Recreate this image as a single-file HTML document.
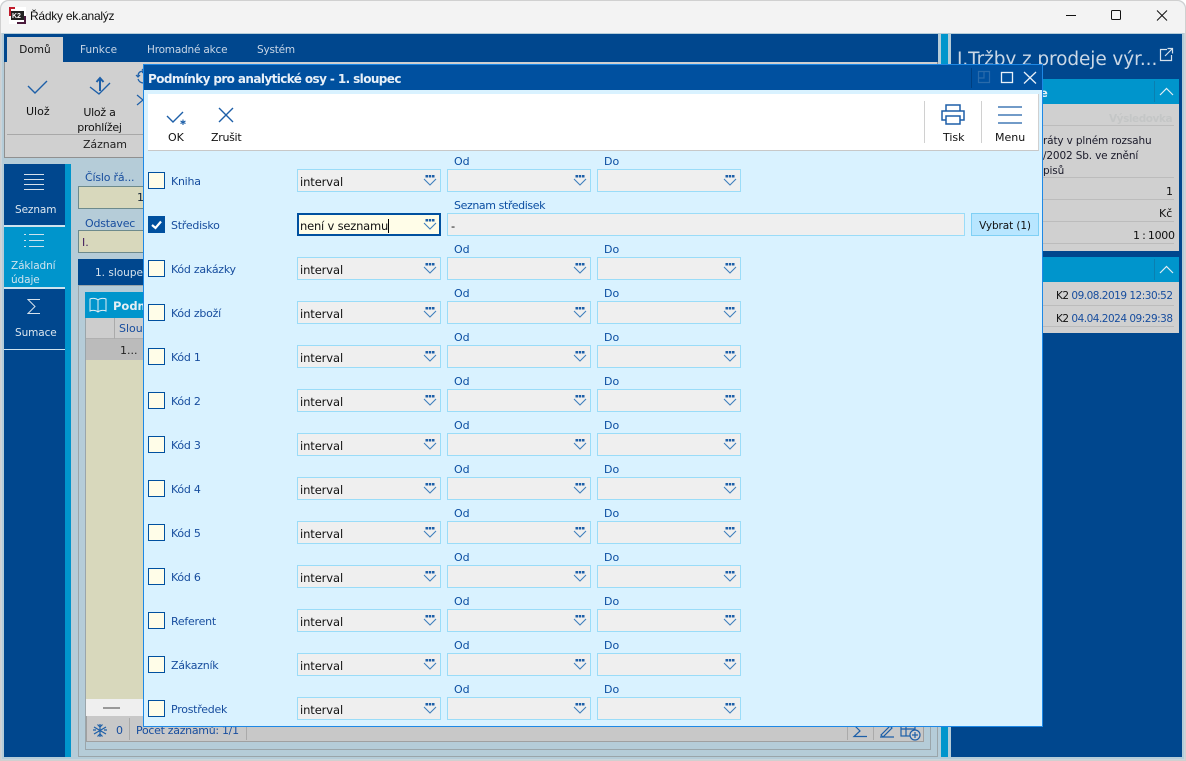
<!DOCTYPE html>
<html><head><meta charset="utf-8">
<style>
*{box-sizing:border-box}
html,body{margin:0;padding:0;width:1186px;height:761px;overflow:hidden;background:#fff}
body{position:relative;font-family:"DejaVu Sans","Liberation Sans",sans-serif;font-size:11px;color:#111}
.a{position:absolute;white-space:nowrap}
.cb{position:absolute;left:148px;width:17px;height:17px;background:#fffde8;border:1px solid #00509f}
.sel{position:absolute;width:144px;height:23px;background:#efefef;border:1px solid #9adcf8;line-height:22px;padding:1px 0 0 2px;font-size:11.5px;letter-spacing:-.1px}
.ar{position:absolute;right:3px;top:4px;width:14px;height:14px}
.lab{position:absolute;left:171px;color:#174d9e;font-size:11px;line-height:14px;white-space:nowrap;letter-spacing:-.25px;transform:translateY(1px)}
.od{position:absolute;color:#0b4ea2;font-size:11px;line-height:12px;white-space:nowrap;transform:translateY(1px)}
</style></head><body>
<svg width="0" height="0" style="position:absolute"><defs><symbol id="dd" viewBox="0 0 14 14"><g fill="#1d5fa8"><rect x="2.500" y="1" width="2.500" height="2.500"/><rect x="5.750" y="1" width="2.500" height="2.500"/><rect x="9" y="1" width="2.500" height="2.500"/></g><path d="M1 5 L7 11 L13 5" fill="none" stroke="#3f7fbc" stroke-width="1.100"/></symbol></defs></svg>

<!-- window chrome -->
<div class="a" style="left:0;top:0;width:1186px;height:761px;background:#c9d5dc;border:1px solid #d0d0d0;border-radius:8px 8px 0 0"></div>
<div class="a" style="left:1px;top:1px;width:1184px;height:32px;background:#f3f3f3;border-radius:8px 8px 0 0"></div>
<svg class="a" style="left:9px;top:7px" width="17" height="17"><rect width="17" height="17" fill="#fff"/><path d="M0 0H6V2H2V9H0Z" fill="#c01c2c"/><path d="M17 9V17H8V15H15V9Z" fill="#4a1a3c"/><rect x="2" y="4" width="13" height="9" fill="#222"/><text x="3" y="11" font-family="Liberation Sans" font-size="7" font-weight="bold" fill="#fff">K2</text></svg>
<div class="a" style="left:30px;top:8px;font:12px 'Liberation Sans',sans-serif;letter-spacing:-.25px;line-height:16px">Řádky ek.analýz</div>
<svg class="a" style="left:1060px;top:5px" width="120" height="22" fill="none" stroke="#111" stroke-width="1"><path d="M6 10.500H16"/><rect x="51.500" y="5.500" width="9" height="9" rx="1"/><path d="M97 5.500L107 15.500M107 5.500L97 15.500"/></svg>

<div class="a" style="left:2px;top:33px;width:1182px;height:726px;background:#b5ccd8"></div>

<!-- ribbon -->
<div class="a" style="left:4px;top:34px;width:934px;height:28px;background:#00478e"></div>
<div class="a" style="left:7px;top:37px;width:56px;height:25px;background:#d0d0d0;text-align:center;line-height:26px;font-size:10.500px;color:#111">Domů</div>
<div class="a" style="left:80px;top:37px;line-height:26px;font-size:10.500px;color:#c8d6e6">Funkce</div>
<div class="a" style="left:147px;top:37px;line-height:26px;font-size:10.500px;letter-spacing:-.2px;color:#c8d6e6">Hromadné akce</div>
<div class="a" style="left:257px;top:37px;line-height:26px;font-size:10.500px;letter-spacing:-.2px;color:#c8d6e6">Systém</div>
<div class="a" style="left:4px;top:62px;width:934px;height:96px;background:#d0d0d0;border:1px solid #909090;border-top:0"></div>
<div class="a" style="left:7px;top:134px;width:136px;height:1px;background:#a8a8a8"></div>
<svg class="a" style="left:25px;top:76px" width="100" height="30" fill="none" stroke="#1d5fa8" stroke-width="1.400"><path d="M3 10L10 17L22 5"/><path d="M65 11L74 18L85 7"/><path d="M75 15V3M71.500 6L75 2L78.500 6" stroke-width="2"/></svg>
<svg class="a" style="left:135px;top:68px" width="9" height="40" fill="none" stroke="#1d5fa8" stroke-width="1.200"><path d="M3 8C3 4 6 3 9 3M3 11C4 14 6 15 9 15M7 1L9 3L7 5M1 7L3 9L5 7"/><path d="M2 27L8 32L2 37"/></svg>
<div class="a" style="left:26px;top:105px;line-height:14px;color:#111;font-size:11px">Ulož</div>
<div class="a" style="left:77px;top:105px;line-height:15px;color:#111;font-size:11px;text-align:center;width:45px;letter-spacing:-.25px">Ulož a<br>prohlížej</div>
<div class="a" style="left:83px;top:138px;line-height:14px;color:#222;font-size:11px;letter-spacing:-.1px">Záznam</div>

<!-- sidebar -->
<div class="a" style="left:4px;top:164px;width:61px;height:593px;background:#00478e"></div>
<div class="a" style="left:65px;top:164px;width:6px;height:593px;background:#0095cc"></div>
<div class="a" style="left:4px;top:225px;width:61px;height:2px;background:#cfe3ee"></div>
<div class="a" style="left:4px;top:227px;width:61px;height:60px;background:#0095cc"></div>
<div class="a" style="left:4px;top:287px;width:61px;height:2px;background:#cfe3ee"></div>
<div class="a" style="left:4px;top:349px;width:61px;height:1px;background:#cfe3ee"></div>
<svg class="a" style="left:24px;top:173px" width="20" height="18" stroke="#d6e2ec" stroke-width="1"><path d="M0 1.500H20M0 6.500H20M0 11.500H20M0 16.500H20"/></svg>
<div class="a" style="left:15px;top:204px;color:#dbe6ef;font-size:10.500px;line-height:13px;letter-spacing:-.1px">Seznam</div>
<svg class="a" style="left:24px;top:233px" width="20" height="16" stroke="#cfe3ee" stroke-width="1"><path d="M0 1.500H2M5 1.500H20M0 7.500H2M5 7.500H20M0 13.500H2M5 13.500H20"/></svg>
<div class="a" style="left:11px;top:260px;color:#cfe3ee;font-size:10.500px;line-height:13.500px;letter-spacing:-.1px">Základní<br>údaje</div>
<svg class="a" style="left:27px;top:298px" width="15" height="17" fill="none" stroke="#d6e2ec" stroke-width="1"><path d="M13 1.500H1L8 8.500L1 15.500H13"/></svg>
<div class="a" style="left:15px;top:327px;color:#dbe6ef;font-size:10.500px;line-height:13px;letter-spacing:-.1px">Sumace</div>

<!-- content -->
<div class="a" style="left:941px;top:34px;width:7px;height:723px;background:#0095cc"></div>
<div class="a" style="left:85px;top:171px;color:#174d9e;font-size:11px;line-height:14px;letter-spacing:-.2px">Číslo řá...</div>
<div class="a" style="left:78px;top:186px;width:80px;height:23px;background:#d8d8bc;border:1px solid #6d8a8c;text-align:right;padding-right:13px;line-height:22px;color:#123">1</div>
<div class="a" style="left:85px;top:217px;color:#174d9e;font-size:11px;line-height:14px;letter-spacing:-.2px">Odstavec</div>
<div class="a" style="left:78px;top:230px;width:80px;height:23px;background:#d8d8bc;border:1px solid #6d8a8c;line-height:23px;padding-left:3px;color:#401a5c">I.</div>
<div class="a" style="left:78px;top:259px;width:70px;height:26px;background:#00478e;color:#d6e2ec;line-height:28px;padding-left:17px;font-size:10.500px;overflow:hidden">1. sloupec</div>
<div class="a" style="left:78px;top:285px;width:860px;height:472px;border:1px solid #9aa5aa"></div>
<div class="a" style="left:85px;top:292px;width:846px;height:458px;border:1px solid #9aa5aa"></div>
<div class="a" style="left:85px;top:292px;width:840px;height:26px;background:#0095cc"></div>
<svg class="a" style="left:89px;top:297px" width="18" height="17" fill="none" stroke="#e4eef4" stroke-width="1"><path d="M9 3C7 1 3 1 1 2V14C3 13 7 13 9 15C11 13 15 13 17 14V2C15 1 11 1 9 3ZM9 3V15"/></svg>
<div class="a" style="left:113px;top:299px;color:#e4eef4;font-weight:bold;font-size:11.500px;line-height:14px">Podm</div>
<div class="a" style="left:86px;top:318px;width:60px;height:21px;background:#cdcdcd;border-bottom:1px solid #b0b0b0"></div>
<div class="a" style="left:114px;top:318px;width:1px;height:42px;background:#aaa"></div>
<div class="a" style="left:119px;top:322px;color:#174d9e;line-height:14px">Slou</div>
<div class="a" style="left:86px;top:339px;width:60px;height:21px;background:#bbb"></div>
<div class="a" style="left:120px;top:344px;color:#222;line-height:14px">1...</div>
<div class="a" style="left:86px;top:360px;width:60px;height:339px;background:#d8d8bc"></div>
<div class="a" style="left:86px;top:699px;width:60px;height:17px;background:#efefef"></div>
<div class="a" style="left:103px;top:707px;width:17px;height:2px;background:#999"></div>
<div class="a" style="left:86px;top:716px;width:838px;height:26px;background:#c8c8c8;border:1px solid #a0a0a0;border-top:0"></div>
<svg class="a" style="left:92px;top:723px" width="16" height="15" fill="none" stroke="#1d5fa8" stroke-width="1.200"><path d="M8 1V14M2 4L14 11M14 4L2 11M5.500 1.500L8 4L10.500 1.500M5.500 13.500L8 11L10.500 13.500M1 7H4M12 7H15"/></svg>
<div class="a" style="left:116px;top:724px;color:#174d9e;line-height:14px">0</div>
<div class="a" style="left:129px;top:718px;width:1px;height:22px;background:#aaa"></div>
<div class="a" style="left:136px;top:724px;color:#174d9e;line-height:14px;font-size:11px;letter-spacing:-.3px">Počet záznamů: 1/1</div>
<div class="a" style="left:246px;top:718px;width:1px;height:22px;background:#aaa"></div>
<div class="a" style="left:847px;top:718px;width:1px;height:22px;background:#aaa"></div>
<div class="a" style="left:873px;top:718px;width:1px;height:22px;background:#aaa"></div>
<svg class="a" style="left:846px;top:722px" width="78" height="20" fill="none" stroke="#1d5fa8" stroke-width="1.200"><path d="M20 3H8L14 9L8 14.500H21"/><path d="M35 13L44 4L46 6L37 15ZM34 15H48"/><rect x="55" y="3" width="14" height="11"/><path d="M55 7H69M60 3V14"/><circle cx="69" cy="13" r="5" fill="#d0d0d0"/><path d="M66 13H72M69 10V16"/></svg>

<!-- right panel -->
<div class="a" style="left:951px;top:34px;width:231px;height:723px;background:#00478e"></div>
<div class="a" style="left:957px;top:48px;font-size:18.500px;line-height:24px;color:#cbd8e6;letter-spacing:-.1px">I.Tržby z prodeje výr...</div>
<svg class="a" style="left:1159px;top:47px" width="15" height="15" fill="none" stroke="#d6e2ec" stroke-width="1.200"><path d="M8 2.500H1.500V13.500H12.500V8"/><path d="M6 9L13 2M8.500 1.500H13.500V6.500"/></svg>
<div class="a" style="left:951px;top:79px;width:228px;height:25px;background:#0095cc"></div>
<div class="a" style="left:1040px;top:86px;color:#e4eef4;font-weight:bold;font-size:11.500px;line-height:14px">e</div>
<div class="a" style="left:1154px;top:81px;width:1px;height:21px;background:#0a7fb0"></div>
<svg class="a" style="left:1159px;top:87px" width="15" height="9" fill="none" stroke="#e4eef4" stroke-width="1.200"><path d="M1 8L7.500 1.500L14 8"/></svg>
<div class="a" style="left:951px;top:104px;width:228px;height:147px;background:#d0d0d0"></div>
<div class="a" style="left:1109px;top:112px;color:#c4c6c6;font-weight:bold;font-size:10.500px;line-height:14px;letter-spacing:-.45px">Výsledovka</div>
<div class="a" style="left:1042px;top:125px;width:132px;height:1px;background:#bcbcbc"></div>
<div class="a" style="left:1043px;top:134px;color:#1a1a2a;font-size:10.500px;line-height:15px;letter-spacing:-.15px">ráty v plném rozsahu<br>/2002 Sb. ve znění<br>pisů</div>
<div class="a" style="left:1042px;top:177px;width:132px;height:1px;background:#bcbcbc"></div>
<div class="a" style="left:1166px;top:185px;line-height:14px">1</div>
<div class="a" style="left:1042px;top:199px;width:132px;height:1px;background:#bcbcbc"></div>
<div class="a" style="left:1159px;top:207px;line-height:14px">Kč</div>
<div class="a" style="left:1042px;top:221px;width:132px;height:1px;background:#bcbcbc"></div>
<div class="a" style="left:1133px;top:229px;line-height:14px;letter-spacing:-.3px;word-spacing:-.8px">1 : 1000</div>
<div class="a" style="left:1042px;top:243px;width:132px;height:1px;background:#bcbcbc"></div>
<div class="a" style="left:951px;top:257px;width:228px;height:25px;background:#0095cc"></div>
<div class="a" style="left:1154px;top:259px;width:1px;height:21px;background:#0a7fb0"></div>
<svg class="a" style="left:1159px;top:265px" width="15" height="9" fill="none" stroke="#e4eef4" stroke-width="1.200"><path d="M1 8L7.500 1.500L14 8"/></svg>
<div class="a" style="left:951px;top:282px;width:228px;height:51px;background:#d0d0d0"></div>
<div class="a" style="left:1056px;top:289px;line-height:14px;font-size:10.500px;letter-spacing:-.5px">K2 <span style="color:#174d9e">09.08.2019 12:30:52</span></div>
<div class="a" style="left:1042px;top:305px;width:132px;height:1px;background:#bcbcbc"></div>
<div class="a" style="left:1056px;top:312px;line-height:14px;font-size:10.500px;letter-spacing:-.5px">K2 <span style="color:#174d9e">04.04.2024 09:29:38</span></div>
<div class="a" style="left:1042px;top:326px;width:132px;height:1px;background:#bcbcbc"></div>

<!-- dialog -->
<div class="a" style="left:143px;top:64px;width:900px;height:663px;background:#d9f2ff;border:1px solid #1e88e5"></div>
<div class="a" style="left:144px;top:65px;width:898px;height:25px;background:#00509f"></div>
<div class="a" style="left:148px;top:71px;color:#e8f0f8;font-weight:bold;font-size:12px;line-height:16px;letter-spacing:-.6px">Podmínky pro analytické osy - 1. sloupec</div>
<div class="a" style="left:971px;top:68px;width:1px;height:20px;background:#003f80"></div>
<svg class="a" style="left:977px;top:70px" width="60" height="16" fill="none"><path d="M1.500 1.500H12.500V12.500H1.500ZM1.500 8H7V1.500" stroke="#2a6bab" stroke-width="1.200"/><rect x="24.500" y="2.500" width="11" height="10" stroke="#e8f0f8" stroke-width="1.300"/><path d="M47 2L59 13.500M59 2L47 13.500" stroke="#e8f0f8" stroke-width="1.300"/></svg>
<div class="a" style="left:148px;top:94px;width:891px;height:57px;background:#fff;border-right:1px solid #d0d0d0;border-bottom:1px solid #c8c8c8"></div>
<svg class="a" style="left:166px;top:106px" width="70" height="20" fill="none" stroke="#1d5fa8" stroke-width="1.400"><path d="M1 10L7 16L17 6"/><path d="M17 14.500V20M14.500 16L19.500 18.500M19.500 16L14.500 18.500" stroke-width="1.100" transform="translate(0,-1)"/><path d="M53 2L67 16M67 2L53 16"/></svg>
<div class="a" style="left:168px;top:131px;line-height:14px;font-size:11px">OK</div>
<div class="a" style="left:211px;top:131px;line-height:14px;font-size:11px;letter-spacing:-.3px">Zrušit</div>
<div class="a" style="left:924px;top:101px;width:1px;height:42px;background:#d0d0d0"></div>
<div class="a" style="left:981px;top:101px;width:1px;height:42px;background:#d0d0d0"></div>
<svg class="a" style="left:941px;top:104px" width="24" height="21" fill="none" stroke="#1d5fa8" stroke-width="1.500"><path d="M5 7V1H19V7"/><path d="M5 16H1V7H23V16H19"/><path d="M5 12H19V20H5Z"/></svg>
<svg class="a" style="left:998px;top:106px" width="24" height="18" stroke="#1d5fa8" stroke-width="1.300"><path d="M0 1H24M0 9H24M0 17H24"/></svg>
<div class="a" style="left:943px;top:131px;line-height:14px;font-size:11px">Tisk</div>
<div class="a" style="left:995px;top:131px;line-height:14px;font-size:11px">Menu</div>

<!-- rows -->
<div class="od" style="left:454px;top:155px">Od</div><div class="od" style="left:604px;top:155px">Do</div>
<div class="cb" style="top:172px"></div><div class="lab" style="top:174px">Kniha</div>
<div class="sel" style="left:297px;top:169px">interval<svg class="ar"><use href="#dd"/></svg></div><div class="sel" style="left:447px;top:169px"><svg class="ar"><use href="#dd"/></svg></div><div class="sel" style="left:597px;top:169px"><svg class="ar"><use href="#dd"/></svg></div>

<div class="od" style="left:454px;top:199px;letter-spacing:-.4px">Seznam středisek</div>
<div class="cb" style="top:216px;background:#00509f"><svg width="15" height="15" style="position:absolute;left:0;top:0" fill="none" stroke="#fff" stroke-width="2.200"><path d="M3 8L6.500 11L12 4.500"/></svg></div><div class="lab" style="top:218px">Středisko</div>
<div class="sel" style="left:297px;top:213px;background:#fffde8;border:2px solid #00509f;line-height:21px;padding:1px 0 0 1px;letter-spacing:-.2px">není v seznamu<span style="display:inline-block;width:1px;height:14px;background:#000;vertical-align:-3px"></span><svg class="ar" style="right:2px;top:3px"><use href="#dd"/></svg></div>
<div class="sel" style="left:447px;top:213px;width:518px;padding-left:3px">-</div>
<div class="sel" style="left:971px;top:213px;width:68px;background:#b8e6ff;border-color:#7fd0f5;font-size:10.500px;text-align:center;padding:1px 0 0">Vybrat (1)</div>

<div class="od" style="left:454px;top:243px">Od</div><div class="od" style="left:604px;top:243px">Do</div>
<div class="cb" style="top:260px"></div><div class="lab" style="top:262px">Kód zakázky</div>
<div class="sel" style="left:297px;top:257px">interval<svg class="ar"><use href="#dd"/></svg></div><div class="sel" style="left:447px;top:257px"><svg class="ar"><use href="#dd"/></svg></div><div class="sel" style="left:597px;top:257px"><svg class="ar"><use href="#dd"/></svg></div>

<div class="od" style="left:454px;top:287px">Od</div><div class="od" style="left:604px;top:287px">Do</div>
<div class="cb" style="top:304px"></div><div class="lab" style="top:306px">Kód zboží</div>
<div class="sel" style="left:297px;top:301px">interval<svg class="ar"><use href="#dd"/></svg></div><div class="sel" style="left:447px;top:301px"><svg class="ar"><use href="#dd"/></svg></div><div class="sel" style="left:597px;top:301px"><svg class="ar"><use href="#dd"/></svg></div>

<div class="od" style="left:454px;top:331px">Od</div><div class="od" style="left:604px;top:331px">Do</div>
<div class="cb" style="top:348px"></div><div class="lab" style="top:350px">Kód 1</div>
<div class="sel" style="left:297px;top:345px">interval<svg class="ar"><use href="#dd"/></svg></div><div class="sel" style="left:447px;top:345px"><svg class="ar"><use href="#dd"/></svg></div><div class="sel" style="left:597px;top:345px"><svg class="ar"><use href="#dd"/></svg></div>

<div class="od" style="left:454px;top:375px">Od</div><div class="od" style="left:604px;top:375px">Do</div>
<div class="cb" style="top:392px"></div><div class="lab" style="top:394px">Kód 2</div>
<div class="sel" style="left:297px;top:389px">interval<svg class="ar"><use href="#dd"/></svg></div><div class="sel" style="left:447px;top:389px"><svg class="ar"><use href="#dd"/></svg></div><div class="sel" style="left:597px;top:389px"><svg class="ar"><use href="#dd"/></svg></div>

<div class="od" style="left:454px;top:419px">Od</div><div class="od" style="left:604px;top:419px">Do</div>
<div class="cb" style="top:436px"></div><div class="lab" style="top:438px">Kód 3</div>
<div class="sel" style="left:297px;top:433px">interval<svg class="ar"><use href="#dd"/></svg></div><div class="sel" style="left:447px;top:433px"><svg class="ar"><use href="#dd"/></svg></div><div class="sel" style="left:597px;top:433px"><svg class="ar"><use href="#dd"/></svg></div>

<div class="od" style="left:454px;top:463px">Od</div><div class="od" style="left:604px;top:463px">Do</div>
<div class="cb" style="top:480px"></div><div class="lab" style="top:482px">Kód 4</div>
<div class="sel" style="left:297px;top:477px">interval<svg class="ar"><use href="#dd"/></svg></div><div class="sel" style="left:447px;top:477px"><svg class="ar"><use href="#dd"/></svg></div><div class="sel" style="left:597px;top:477px"><svg class="ar"><use href="#dd"/></svg></div>

<div class="od" style="left:454px;top:507px">Od</div><div class="od" style="left:604px;top:507px">Do</div>
<div class="cb" style="top:524px"></div><div class="lab" style="top:526px">Kód 5</div>
<div class="sel" style="left:297px;top:521px">interval<svg class="ar"><use href="#dd"/></svg></div><div class="sel" style="left:447px;top:521px"><svg class="ar"><use href="#dd"/></svg></div><div class="sel" style="left:597px;top:521px"><svg class="ar"><use href="#dd"/></svg></div>

<div class="od" style="left:454px;top:551px">Od</div><div class="od" style="left:604px;top:551px">Do</div>
<div class="cb" style="top:568px"></div><div class="lab" style="top:570px">Kód 6</div>
<div class="sel" style="left:297px;top:565px">interval<svg class="ar"><use href="#dd"/></svg></div><div class="sel" style="left:447px;top:565px"><svg class="ar"><use href="#dd"/></svg></div><div class="sel" style="left:597px;top:565px"><svg class="ar"><use href="#dd"/></svg></div>

<div class="od" style="left:454px;top:595px">Od</div><div class="od" style="left:604px;top:595px">Do</div>
<div class="cb" style="top:612px"></div><div class="lab" style="top:614px">Referent</div>
<div class="sel" style="left:297px;top:609px">interval<svg class="ar"><use href="#dd"/></svg></div><div class="sel" style="left:447px;top:609px"><svg class="ar"><use href="#dd"/></svg></div><div class="sel" style="left:597px;top:609px"><svg class="ar"><use href="#dd"/></svg></div>

<div class="od" style="left:454px;top:639px">Od</div><div class="od" style="left:604px;top:639px">Do</div>
<div class="cb" style="top:656px"></div><div class="lab" style="top:658px">Zákazník</div>
<div class="sel" style="left:297px;top:653px">interval<svg class="ar"><use href="#dd"/></svg></div><div class="sel" style="left:447px;top:653px"><svg class="ar"><use href="#dd"/></svg></div><div class="sel" style="left:597px;top:653px"><svg class="ar"><use href="#dd"/></svg></div>

<div class="od" style="left:454px;top:683px">Od</div><div class="od" style="left:604px;top:683px">Do</div>
<div class="cb" style="top:700px"></div><div class="lab" style="top:702px">Prostředek</div>
<div class="sel" style="left:297px;top:697px">interval<svg class="ar"><use href="#dd"/></svg></div><div class="sel" style="left:447px;top:697px"><svg class="ar"><use href="#dd"/></svg></div><div class="sel" style="left:597px;top:697px"><svg class="ar"><use href="#dd"/></svg></div>
</body></html>
